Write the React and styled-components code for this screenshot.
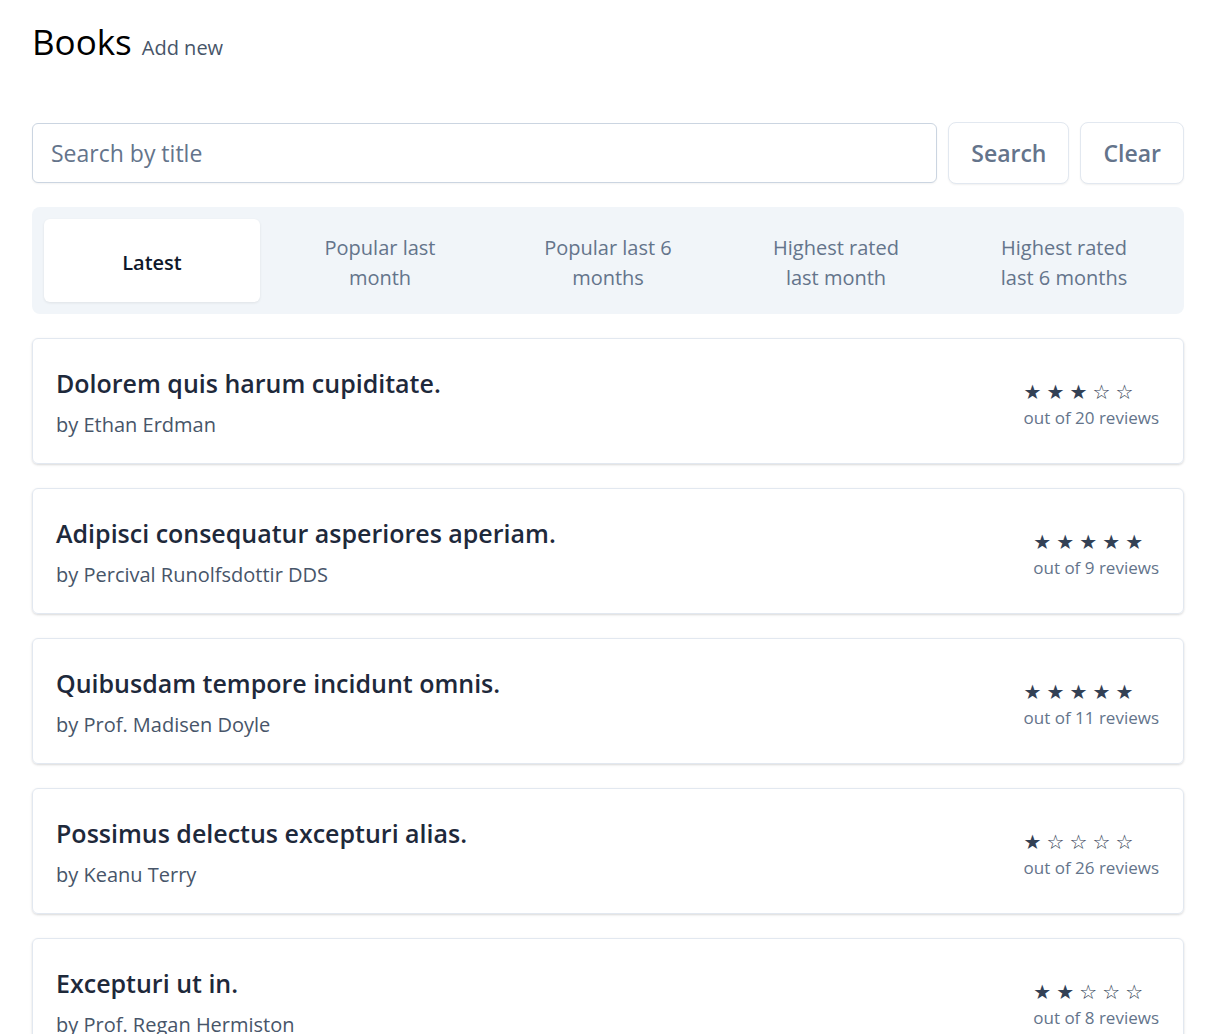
import React from "react";
import styled, { createGlobalStyle } from "styled-components";

const books = [
  { title: "Dolorem quis harum cupiditate.", author: "Ethan Erdman", rating: 3, reviews: 20 },
  { title: "Adipisci consequatur asperiores aperiam.", author: "Percival Runolfsdottir DDS", rating: 5, reviews: 9 },
  { title: "Quibusdam tempore incidunt omnis.", author: "Prof. Madisen Doyle", rating: 5, reviews: 11 },
  { title: "Possimus delectus excepturi alias.", author: "Keanu Terry", rating: 1, reviews: 26 },
  { title: "Excepturi ut in.", author: "Prof. Regan Hermiston", rating: 2, reviews: 8 },
];

const tabs = [
  "Latest",
  "Popular last month",
  "Popular last 6 months",
  "Highest rated last month",
  "Highest rated last 6 months",
];

const GlobalStyle = createGlobalStyle`
  body {
    margin: 0;
    background: #fff;
    font-family: "Open Sans", "Noto Sans", sans-serif;
    overflow: hidden;
  }
`;

const Page = styled.div`
  width: 1152px;
  padding: 22px 0 0 32px;
`;

const Header = styled.div`
  display: flex;
  align-items: baseline;
  gap: 10px;
  height: 40px;
  margin-bottom: 61px;
`;

const Title = styled.h1`
  margin: 0;
  font-size: 35px;
  font-weight: 400;
  line-height: 40px;
  color: #000;
`;

const AddLink = styled.a`
  font-size: 20px;
  color: #475569;
  text-decoration: none;
`;

const SearchRow = styled.form`
  display: flex;
  align-items: center;
  gap: 11px;
  height: 60px;
  margin-bottom: 24px;
`;

const SearchInput = styled.input`
  flex: 1;
  height: 60px;
  box-sizing: border-box;
  border: 1px solid #cbd5e1;
  border-radius: 6px;
  padding: 0 18px;
  font-family: inherit;
  font-size: 23px;
  color: #1e293b;
  box-shadow: 0 1px 2px rgba(0, 0, 0, 0.05);
  &::placeholder {
    color: #64748b;
  }
`;

const Button = styled.button`
  height: 62px;
  padding: 0 22px;
  background: #fff;
  border: 1px solid #e2e8f0;
  border-radius: 8px;
  box-shadow: 0 1px 2px rgba(0, 0, 0, 0.06);
  font-family: inherit;
  font-size: 23px;
  font-weight: 600;
  color: #64748b;
`;

const TabBar = styled.div`
  display: grid;
  grid-template-columns: repeat(5, 1fr);
  gap: 12px;
  padding: 12px;
  background: #f1f5f9;
  border-radius: 8px;
  margin-bottom: 24px;
`;

const Tab = styled.div`
  display: flex;
  align-items: center;
  justify-content: center;
  text-align: center;
  padding: 14px 32px 9px;
  font-size: 20px;
  line-height: 30px;
  border-radius: 6px;
  font-weight: ${(p) => (p.$active ? 600 : 500)};
  color: ${(p) => (p.$active ? "#0f172a" : "#64748b")};
  background: ${(p) => (p.$active ? "#fff" : "transparent")};
  box-shadow: ${(p) => (p.$active ? "0 1px 3px rgba(0,0,0,0.08)" : "none")};
`;

const List = styled.div`
  display: flex;
  flex-direction: column;
  gap: 24px;
`;

const Card = styled.div`
  display: flex;
  justify-content: space-between;
  align-items: center;
  padding: 28px 24px 24px 23px;
  border: 1px solid #e2e8f0;
  border-radius: 6px;
  box-shadow: 0 1px 3px rgba(0, 0, 0, 0.1), 0 1px 2px rgba(0, 0, 0, 0.06);
`;

const BookTitle = styled.div`
  font-size: 25px;
  line-height: 32px;
  font-weight: 600;
  color: #1e293b;
  margin-bottom: 12px;
`;

const Author = styled.div`
  font-size: 20px;
  line-height: 28px;
  color: #475569;
`;

const Rating = styled.div`
  margin-top: 3px;
`;

const Stars = styled.div`
  display: flex;
  height: 26px;
  align-items: center;
`;

const Star = styled.span`
  width: 23px;
  font-family: "DejaVu Sans", sans-serif;
  font-size: 20px;
  color: #334155;
`;

const Reviews = styled.div`
  font-size: 17px;
  line-height: 26px;
  color: #64748b;
`;

export default function App() {
  return (
    <Page>
      <GlobalStyle />
      <Header>
        <Title>Books</Title>
        <AddLink href="#">Add new</AddLink>
      </Header>

      <SearchRow onSubmit={(e) => e.preventDefault()}>
        <SearchInput placeholder="Search by title" />
        <Button type="submit">Search</Button>
        <Button type="button">Clear</Button>
      </SearchRow>

      <TabBar>
        {tabs.map((t, i) => (
          <Tab key={t} $active={i === 0}>
            {t}
          </Tab>
        ))}
      </TabBar>

      <List>
        {books.map((b) => (
          <Card key={b.title}>
            <div>
              <BookTitle>{b.title}</BookTitle>
              <Author>by {b.author}</Author>
            </div>
            <Rating>
              <Stars>
                {[1, 2, 3, 4, 5].map((n) => (
                  <Star key={n}>{n <= b.rating ? "★" : "☆"}</Star>
                ))}
              </Stars>
              <Reviews>out of {b.reviews} reviews</Reviews>
            </Rating>
          </Card>
        ))}
      </List>
    </Page>
  );
}
